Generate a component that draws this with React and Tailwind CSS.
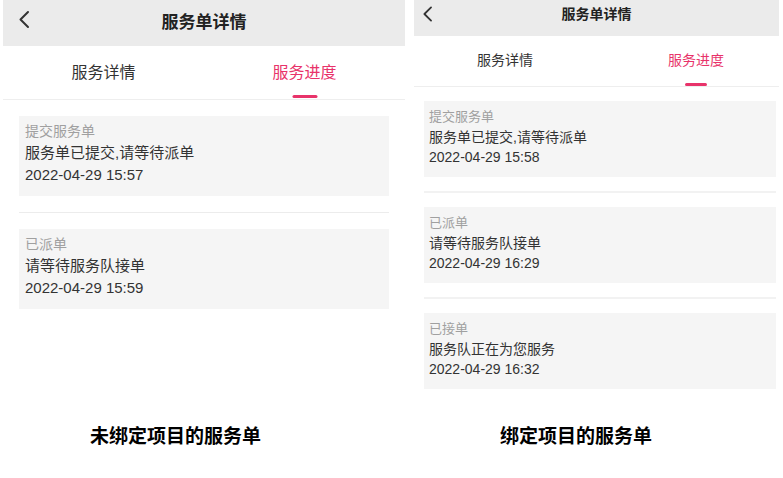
const font = { fontFamily: '"Liberation Sans", "Noto Sans CJK SC", sans-serif' };

const leftItems = [
  { label: '提交服务单', text: '服务单已提交,请等待派单', time: '2022-04-29 15:57' },
  { label: '已派单', text: '请等待服务队接单', time: '2022-04-29 15:59' },
];

const rightItems = [
  { label: '提交服务单', text: '服务单已提交,请等待派单', time: '2022-04-29 15:58' },
  { label: '已派单', text: '请等待服务队接单', time: '2022-04-29 16:29' },
  { label: '已接单', text: '服务队正在为您服务', time: '2022-04-29 16:32' },
];

function Chevron({ className }) {
  return (
    <svg className={className} viewBox="0 0 12 18" fill="none">
      <path d="M10 1.5 L2.5 9 L10 16.5" stroke="#333" strokeWidth="2" strokeLinecap="round" strokeLinejoin="round" />
    </svg>
  );
}

function LeftPanel() {
  return (
    <div className="w-[402px] ml-[3px]">
      <div className="relative h-[46px] bg-[#ebebeb] flex items-center justify-center">
        <Chevron className="absolute left-[15px] top-[10px] w-[12px] h-[19px]" />
        <span className="text-[17px] font-bold text-[#222]">服务单详情</span>
      </div>
      <div className="flex h-[54px] border-b border-[#eeeeee]">
        <div className="flex-1 flex items-center justify-center text-[16px] text-[#333] pt-[1px]">服务详情</div>
        <div className="flex-1 relative flex items-center justify-center text-[16px] text-[#e8336a] pt-[1px]">
          服务进度
          <div className="absolute bottom-[1px] left-1/2 -translate-x-1/2 w-[25px] h-[3px] rounded-full bg-[#e8336a]" />
        </div>
      </div>
      <div className="px-[16px] pt-[16px]">
        {leftItems.map((it, i) => (
          <div key={i}>
            {i > 0 && <div className="h-[1px] bg-[#ececec] my-[16px]" />}
            <div className="bg-[#f5f5f5] h-[80px] pl-[6px] pt-[4px] leading-[22px]">
              <div className="text-[14px] text-[#a0a0a0]">{it.label}</div>
              <div className="text-[15px] text-[#333]">{it.text}</div>
              <div className="text-[15px] text-[#333]">{it.time}</div>
            </div>
          </div>
        ))}
      </div>
    </div>
  );
}

function RightPanel() {
  return (
    <div className="w-[365px] ml-[9px]">
      <div className="relative h-[36px] bg-[#ebebeb] flex justify-center pt-[4px]">
        <Chevron className="absolute left-[8px] top-[6px] w-[11px] h-[16px]" />
        <span className="text-[14px] leading-[20px] font-bold text-[#222]">服务单详情</span>
      </div>
      <div className="flex h-[51px] border-b border-[#eeeeee]">
        <div className="w-[182px] flex items-center justify-center text-[14px] text-[#333] pb-[2px]">服务详情</div>
        <div className="w-[164px] ml-[18px] relative flex items-center justify-center text-[14px] text-[#e8336a] pb-[2px]">
          服务进度
          <div className="absolute bottom-0 left-1/2 -translate-x-1/2 w-[22px] h-[3px] rounded-full bg-[#e8336a]" />
        </div>
      </div>
      <div className="pl-[10px] pr-[3px] pt-[14px]">
        {rightItems.map((it, i) => (
          <div key={i}>
            {i > 0 && <div className="h-[2px] bg-[#f2f2f2] my-[14px]" />}
            <div className="bg-[#f5f5f5] h-[76px] pl-[5px] pt-[6px] leading-[20px]">
              <div className="text-[13px] text-[#a0a0a0]">{it.label}</div>
              <div className="text-[14px] text-[#333]">{it.text}</div>
              <div className="text-[14px] text-[#333]">{it.time}</div>
            </div>
          </div>
        ))}
      </div>
    </div>
  );
}

export default function App() {
  return (
    <div className="w-[783px] h-[478px] bg-white relative overflow-hidden" style={font}>
      <div className="flex h-[400px]">
        <LeftPanel />
        <RightPanel />
      </div>
      <div className="flex text-[19px] font-bold text-black leading-[24px] pt-[25px]">
        <div className="ml-[90px]">未绑定项目的服务单</div>
        <div className="ml-[239px]">绑定项目的服务单</div>
      </div>
    </div>
  );
}
